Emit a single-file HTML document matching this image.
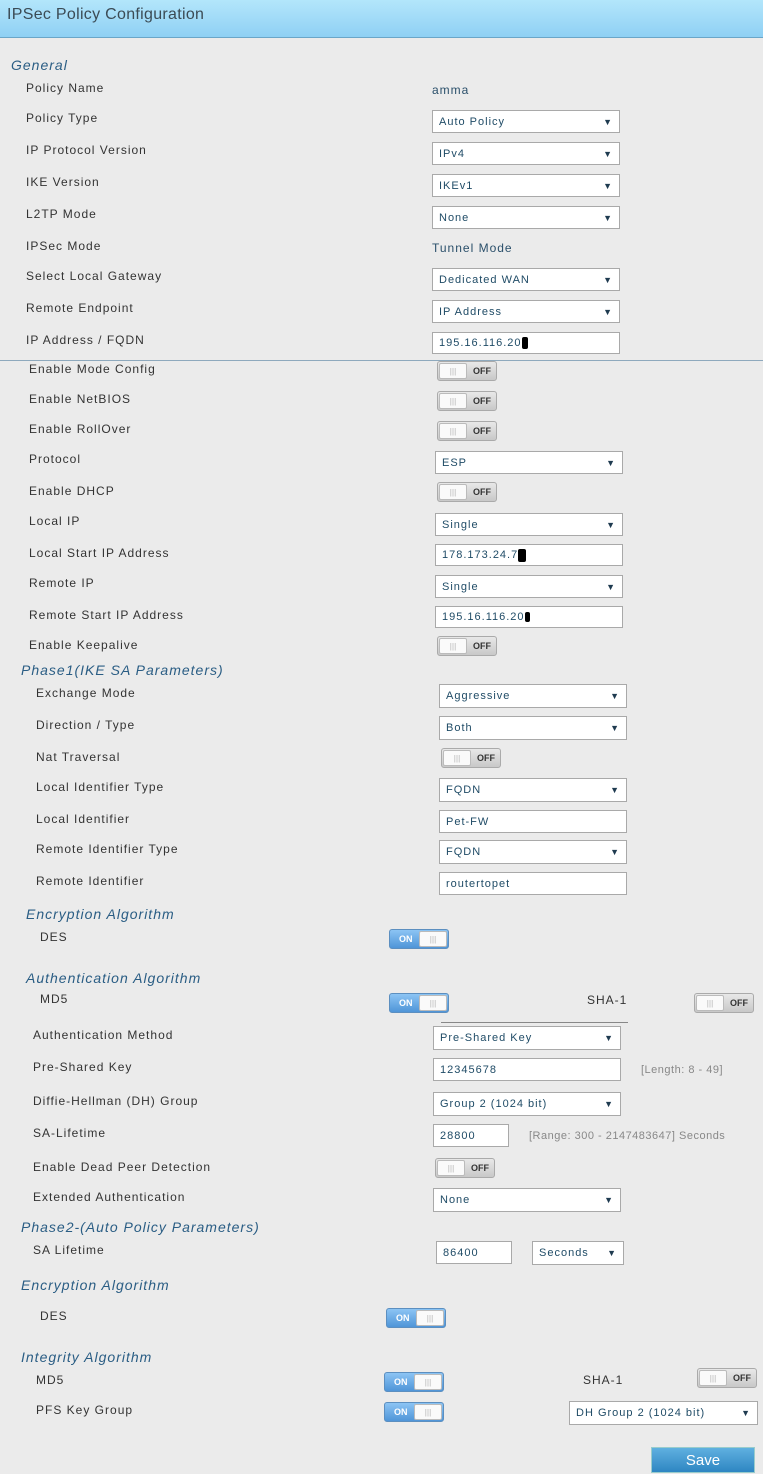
<!DOCTYPE html>
<html><head><meta charset="utf-8"><style>
body{margin:0;width:763px;height:1469px;background:#ebebeb;font-family:"Liberation Sans",sans-serif;position:relative;overflow:hidden}
.a{position:absolute}
.hd{left:0;top:0;width:763px;height:37px;background:linear-gradient(#b3e6fb,#8fd0f4);border-bottom:1px solid #6aa6c8}
.hd span{position:absolute;left:7px;top:6px;font-size:16px;color:#3b4b55;letter-spacing:.3px}
.h{font-style:italic;font-size:14px;color:#2a5d84;letter-spacing:1px}
.l{font-size:12px;color:#333;letter-spacing:1px;transform:translateY(-50%)}
.v{font-size:12px;color:#2a4f6a;letter-spacing:1px;transform:translateY(-50%)}
.s,.i{background:#fff;border:1px solid #a9a9a9;box-sizing:border-box;font-size:11px;color:#1f4b66;letter-spacing:1px;padding-left:6px;line-height:22px}
.s:after{content:"▼";position:absolute;right:6px;top:0;font-size:9px;color:#1f3b50}
.t{width:60px;height:20px;border-radius:3px;box-sizing:border-box;border:1px solid #aaa;font-size:9px;font-weight:bold;overflow:hidden}
.off{background:linear-gradient(#e8e8e8,#c8c8c8)}
.off:before{content:"|||";position:absolute;left:1px;top:1px;width:28px;height:16px;background:#fafafa;border:1px solid #bbb;border-radius:2px;color:#ccc;font-size:8px;text-align:center;line-height:16px;box-sizing:border-box}
.off:after{content:"OFF";position:absolute;left:35px;top:4px;color:#333}
.on{background:linear-gradient(#8cc4f4,#4f95d8);border-color:#5c8fc0}
.on:before{content:"ON";position:absolute;left:9px;top:4px;color:#fff}
.on:after{content:"|||";position:absolute;right:1px;top:1px;width:28px;height:16px;background:#fafafa;border:1px solid #bbb;border-radius:2px;color:#ccc;font-size:8px;text-align:center;line-height:16px;box-sizing:border-box}
.g{font-size:11px;color:#888;letter-spacing:.5px;transform:translateY(-50%)}
</style></head><body>
<div class="a hd"><span>IPSec Policy Configuration</span></div>
<div class="a h" style="left:11px;top:57px">General</div>
<div class="a l" style="left:26px;top:88px">Policy Name</div><div class="a v" style="left:432px;top:90px">amma</div>
<div class="a l" style="left:26px;top:118px">Policy Type</div><div class="a s" style="left:432px;top:110px;width:188px;height:23px">Auto Policy</div>
<div class="a l" style="left:26px;top:150px">IP Protocol Version</div><div class="a s" style="left:432px;top:142px;width:188px;height:23px">IPv4</div>
<div class="a l" style="left:26px;top:182px">IKE Version</div><div class="a s" style="left:432px;top:174px;width:188px;height:23px">IKEv1</div>
<div class="a l" style="left:26px;top:214px">L2TP Mode</div><div class="a s" style="left:432px;top:206px;width:188px;height:23px">None</div>
<div class="a l" style="left:26px;top:246px">IPSec Mode</div><div class="a v" style="left:432px;top:248px">Tunnel Mode</div>
<div class="a l" style="left:26px;top:276px">Select Local Gateway</div><div class="a s" style="left:432px;top:268px;width:188px;height:23px">Dedicated WAN</div>
<div class="a l" style="left:26px;top:308px">Remote Endpoint</div><div class="a s" style="left:432px;top:300px;width:188px;height:23px">IP Address</div>
<div class="a l" style="left:26px;top:340px">IP Address / FQDN</div><div class="a i" style="left:432px;top:332px;width:188px;height:22px;line-height:20px">195.16.116.20<span style="display:inline-block;width:6px;height:12px;background:#000;border-radius:2px;vertical-align:middle"></span></div>
<div class="a" style="left:0;top:360px;width:763px;height:1px;background:#8ea9bd"></div>
<div class="a l" style="left:29px;top:369px">Enable Mode Config</div><div class="a t off" style="left:437px;top:361px"></div>
<div class="a l" style="left:29px;top:399px">Enable NetBIOS</div><div class="a t off" style="left:437px;top:391px"></div>
<div class="a l" style="left:29px;top:429px">Enable RollOver</div><div class="a t off" style="left:437px;top:421px"></div>
<div class="a l" style="left:29px;top:459px">Protocol</div><div class="a s" style="left:435px;top:451px;width:188px;height:23px">ESP</div>
<div class="a l" style="left:29px;top:491px">Enable DHCP</div><div class="a t off" style="left:437px;top:482px"></div>
<div class="a l" style="left:29px;top:521px">Local IP</div><div class="a s" style="left:435px;top:513px;width:188px;height:23px">Single</div>
<div class="a l" style="left:29px;top:553px">Local Start IP Address</div><div class="a i" style="left:435px;top:544px;width:188px;height:22px;line-height:20px">178.173.24.7<span style="display:inline-block;width:8px;height:13px;background:#000;border-radius:2px;vertical-align:middle"></span></div>
<div class="a l" style="left:29px;top:583px">Remote IP</div><div class="a s" style="left:435px;top:575px;width:188px;height:23px">Single</div>
<div class="a l" style="left:29px;top:615px">Remote Start IP Address</div><div class="a i" style="left:435px;top:606px;width:188px;height:22px;line-height:20px">195.16.116.20<span style="display:inline-block;width:5px;height:10px;background:#000;border-radius:2px;vertical-align:middle"></span></div>
<div class="a l" style="left:29px;top:645px">Enable Keepalive</div><div class="a t off" style="left:437px;top:636px"></div>
<div class="a h" style="left:21px;top:662px">Phase1(IKE SA Parameters)</div>
<div class="a l" style="left:36px;top:693px">Exchange Mode</div><div class="a s" style="left:439px;top:684px;width:188px;height:24px">Aggressive</div>
<div class="a l" style="left:36px;top:725px">Direction / Type</div><div class="a s" style="left:439px;top:716px;width:188px;height:24px">Both</div>
<div class="a l" style="left:36px;top:757px">Nat Traversal</div><div class="a t off" style="left:441px;top:748px"></div>
<div class="a l" style="left:36px;top:787px">Local Identifier Type</div><div class="a s" style="left:439px;top:778px;width:188px;height:24px">FQDN</div>
<div class="a l" style="left:36px;top:819px">Local Identifier</div><div class="a i" style="left:439px;top:810px;width:188px;height:23px">Pet-FW</div>
<div class="a l" style="left:36px;top:849px">Remote Identifier Type</div><div class="a s" style="left:439px;top:840px;width:188px;height:24px">FQDN</div>
<div class="a l" style="left:36px;top:881px">Remote Identifier</div><div class="a i" style="left:439px;top:872px;width:188px;height:23px">routertopet</div>
<div class="a h" style="left:26px;top:906px">Encryption Algorithm</div>
<div class="a l" style="left:40px;top:937px">DES</div><div class="a t on" style="left:389px;top:929px"></div>
<div class="a h" style="left:26px;top:970px">Authentication Algorithm</div>
<div class="a l" style="left:40px;top:999px">MD5</div><div class="a t on" style="left:389px;top:993px"></div>
<div class="a l" style="left:587px;top:1000px">SHA-1</div><div class="a t off" style="left:694px;top:993px"></div>
<div class="a" style="left:441px;top:1022px;width:187px;height:1px;background:#888"></div>
<div class="a l" style="left:33px;top:1035px">Authentication Method</div><div class="a s" style="left:433px;top:1026px;width:188px;height:24px">Pre-Shared Key</div>
<div class="a l" style="left:33px;top:1067px">Pre-Shared Key</div><div class="a i" style="left:433px;top:1058px;width:188px;height:23px">12345678</div><div class="a g" style="left:641px;top:1070px">[Length: 8 - 49]</div>
<div class="a l" style="left:33px;top:1101px">Diffie-Hellman (DH) Group</div><div class="a s" style="left:433px;top:1092px;width:188px;height:24px">Group 2 (1024 bit)</div>
<div class="a l" style="left:33px;top:1133px">SA-Lifetime</div><div class="a i" style="left:433px;top:1124px;width:76px;height:23px">28800</div><div class="a g" style="left:529px;top:1136px">[Range: 300 - 2147483647] Seconds</div>
<div class="a l" style="left:33px;top:1167px">Enable Dead Peer Detection</div><div class="a t off" style="left:435px;top:1158px"></div>
<div class="a l" style="left:33px;top:1197px">Extended Authentication</div><div class="a s" style="left:433px;top:1188px;width:188px;height:24px">None</div>
<div class="a h" style="left:21px;top:1219px">Phase2-(Auto Policy Parameters)</div>
<div class="a l" style="left:33px;top:1250px">SA Lifetime</div><div class="a i" style="left:436px;top:1241px;width:76px;height:23px">86400</div><div class="a s" style="left:532px;top:1241px;width:92px;height:24px">Seconds</div>
<div class="a h" style="left:21px;top:1277px">Encryption Algorithm</div>
<div class="a l" style="left:40px;top:1316px">DES</div><div class="a t on" style="left:386px;top:1308px"></div>
<div class="a h" style="left:21px;top:1349px">Integrity Algorithm</div>
<div class="a l" style="left:36px;top:1380px">MD5</div><div class="a t on" style="left:384px;top:1372px"></div>
<div class="a l" style="left:583px;top:1380px">SHA-1</div><div class="a t off" style="left:697px;top:1368px"></div>
<div class="a l" style="left:36px;top:1410px">PFS Key Group</div><div class="a t on" style="left:384px;top:1402px"></div>
<div class="a s" style="left:569px;top:1401px;width:189px;height:24px">DH Group 2 (1024 bit)</div>
<div class="a" style="left:651px;top:1447px;width:104px;height:26px;background:linear-gradient(#5fb0e0,#2e86c2);border:1px solid #9cc;box-sizing:border-box;color:#fff;font-size:15px;text-align:center;line-height:26px">Save</div>
</body></html>
